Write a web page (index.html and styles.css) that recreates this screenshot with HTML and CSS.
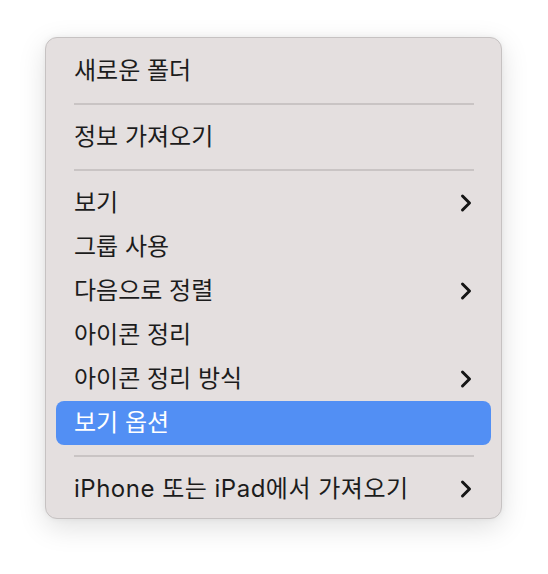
FILE: index.html
```html
<!DOCTYPE html>
<html lang="ko">
<head>
    <meta charset="UTF-8">
    <meta name="viewport" content="width=device-width, initial-scale=1.0">
    <title>Finder 컨텍스트 메뉴</title>
    <link rel="stylesheet" href="styles.css">
</head>
<body>
    <div class="menu">
        <div class="menu-item">새로운 폴더</div>
        <div class="separator"></div>
        <div class="menu-item">정보 가져오기</div>
        <div class="separator"></div>
        <div class="menu-item">
            <span>보기</span>
            <svg class="chevron" viewBox="0 0 12 20"><polyline points="2.5,3 9.5,10 2.5,17"/></svg>
        </div>
        <div class="menu-item">그룹 사용</div>
        <div class="menu-item">
            <span>다음으로 정렬</span>
            <svg class="chevron" viewBox="0 0 12 20"><polyline points="2.5,3 9.5,10 2.5,17"/></svg>
        </div>
        <div class="menu-item">아이콘 정리</div>
        <div class="menu-item">
            <span>아이콘 정리 방식</span>
            <svg class="chevron" viewBox="0 0 12 20"><polyline points="2.5,3 9.5,10 2.5,17"/></svg>
        </div>
        <div class="menu-item selected">보기 옵션</div>
        <div class="separator"></div>
        <div class="menu-item">
            <span class="wide">iPhone 또는 iPad에서 가져오기</span>
            <svg class="chevron" viewBox="0 0 12 20"><polyline points="2.5,3 9.5,10 2.5,17"/></svg>
        </div>
    </div>
</body>
</html>
```

FILE: styles.css
```css
body {
    margin: 0;
    padding: 37px 0 0 45px;
    background: #ffffff;
    font-family: Inter, "Noto Sans CJK KR", sans-serif;
    min-height: 574px;
    box-sizing: border-box;
}

.menu {
    width: 457px;
    box-sizing: border-box;
    padding: 11px 10px 7px 10px;
    background: #e4dfdf;
    border: 1px solid #c6c2c2;
    border-radius: 12px;
    box-shadow: 0 8px 28px rgba(0, 0, 0, 0.13), 0 0 6px rgba(0, 0, 0, 0.05);
}

.menu-item {
    height: 44px;
    box-sizing: border-box;
    display: flex;
    align-items: center;
    justify-content: space-between;
    padding: 0 19px 0 18px;
    font-size: 24px;
    line-height: 1;
    color: #1c1c1c;
    border-radius: 8px;
    white-space: nowrap;
}

.menu-item .wide {
    letter-spacing: 0.5px;
}

.menu-item.selected {
    background: #528ff4;
    color: #ffffff;
}

.chevron {
    width: 12px;
    height: 20px;
    fill: none;
    stroke: #151515;
    stroke-width: 3;
    stroke-linecap: round;
    stroke-linejoin: round;
}

.separator {
    height: 2px;
    margin: 10px 17px 10px 18px;
    background: #c9c4c4;
}
```
